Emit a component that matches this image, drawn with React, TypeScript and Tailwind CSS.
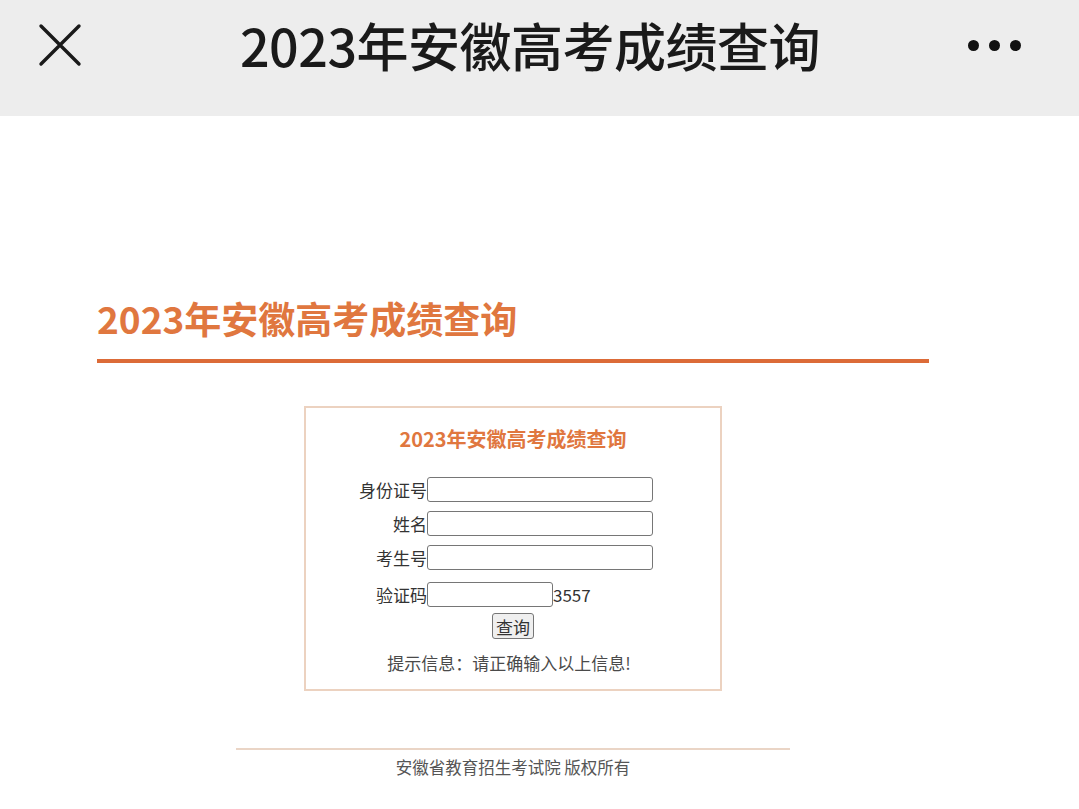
const font = { fontFamily: '"Noto Sans CJK SC", "Noto Sans", sans-serif' };

const Row = ({ label, short, extra }: { label: string; short?: boolean; extra?: string }) => {
  return (
    <div className="flex items-center h-[25px]">
      <label className="w-[121px] text-right text-[17px] text-[#333] leading-none">{label}</label>
      <input
        type="text"
        className={`${short ? "w-[126px]" : "w-[226px]"} h-[25px] border border-[#767676] rounded-[3px] bg-white outline-none`}
      />
      {extra && <span className="text-[17px] text-[#333] leading-none">{extra}</span>}
    </div>
  );
};

const App = () => {
  return (
    <div className="w-[1079px] h-[809px] bg-white overflow-hidden" style={font}>
      <div className="h-[116px] bg-[#ededed] pb-[26px]">
        <div className="h-[90px] flex items-center pl-[38px] pr-[58px]">
          <svg width="44" height="44" viewBox="0 0 44 44" className="text-[#1a1a1a]">
            <path d="M3 3 L41 41 M41 3 L3 41" stroke="currentColor" strokeWidth="3.4" strokeLinecap="round" />
          </svg>
          <div className="flex-1 text-center text-[52px] font-medium text-[#1a1a1a] leading-none tracking-[-0.5px] pl-[10px]">
            2023年安徽高考成绩查询
          </div>
          <div className="flex gap-[10px]">
            <span className="w-[11px] h-[11px] rounded-full bg-[#111]" />
            <span className="w-[11px] h-[11px] rounded-full bg-[#111]" />
            <span className="w-[11px] h-[11px] rounded-full bg-[#111]" />
          </div>
        </div>
      </div>

      <div className="ml-[97px] w-[832px] pt-[184px]">
        <h1 className="text-[37px] font-bold text-[#e0773f] leading-none pb-[22px]">2023年安徽高考成绩查询</h1>
        <div className="h-[4px] bg-[#dc6b38]" />

        <div className="mx-auto mt-[43px] w-[418px] h-[285px] border-2 border-[#ecd2c0] pt-[21px]">
          <div className="text-center text-[20px] font-bold text-[#e0773f] leading-none">2023年安徽高考成绩查询</div>
          <div className="mt-[28px] flex flex-col gap-[9px]">
            <Row label="身份证号" />
            <Row label="姓名" />
            <Row label="考生号" />
            <div className="mt-[3px]">
              <Row label="验证码" short extra="3557" />
            </div>
          </div>
          <div className="flex justify-center mt-[6px]">
            <button className="h-[26px] px-[3px] border border-[#767676] rounded-[3px] bg-[#efefef] text-[17px] text-[#333] leading-none">
              查询
            </button>
          </div>
          <div className="text-center text-[17px] text-[#4a4a4a] mt-[15px] leading-none pr-[8px]">
            提示信息：请正确输入以上信息!
          </div>
        </div>

        <div className="mx-auto mt-[57px] w-[554px] h-[2px] bg-[#ead5c6]" />
        <div className="text-center text-[16.5px] text-[#555] mt-[9px] leading-none">安徽省教育招生考试院 版权所有</div>
      </div>
    </div>
  );
};

export default App;
